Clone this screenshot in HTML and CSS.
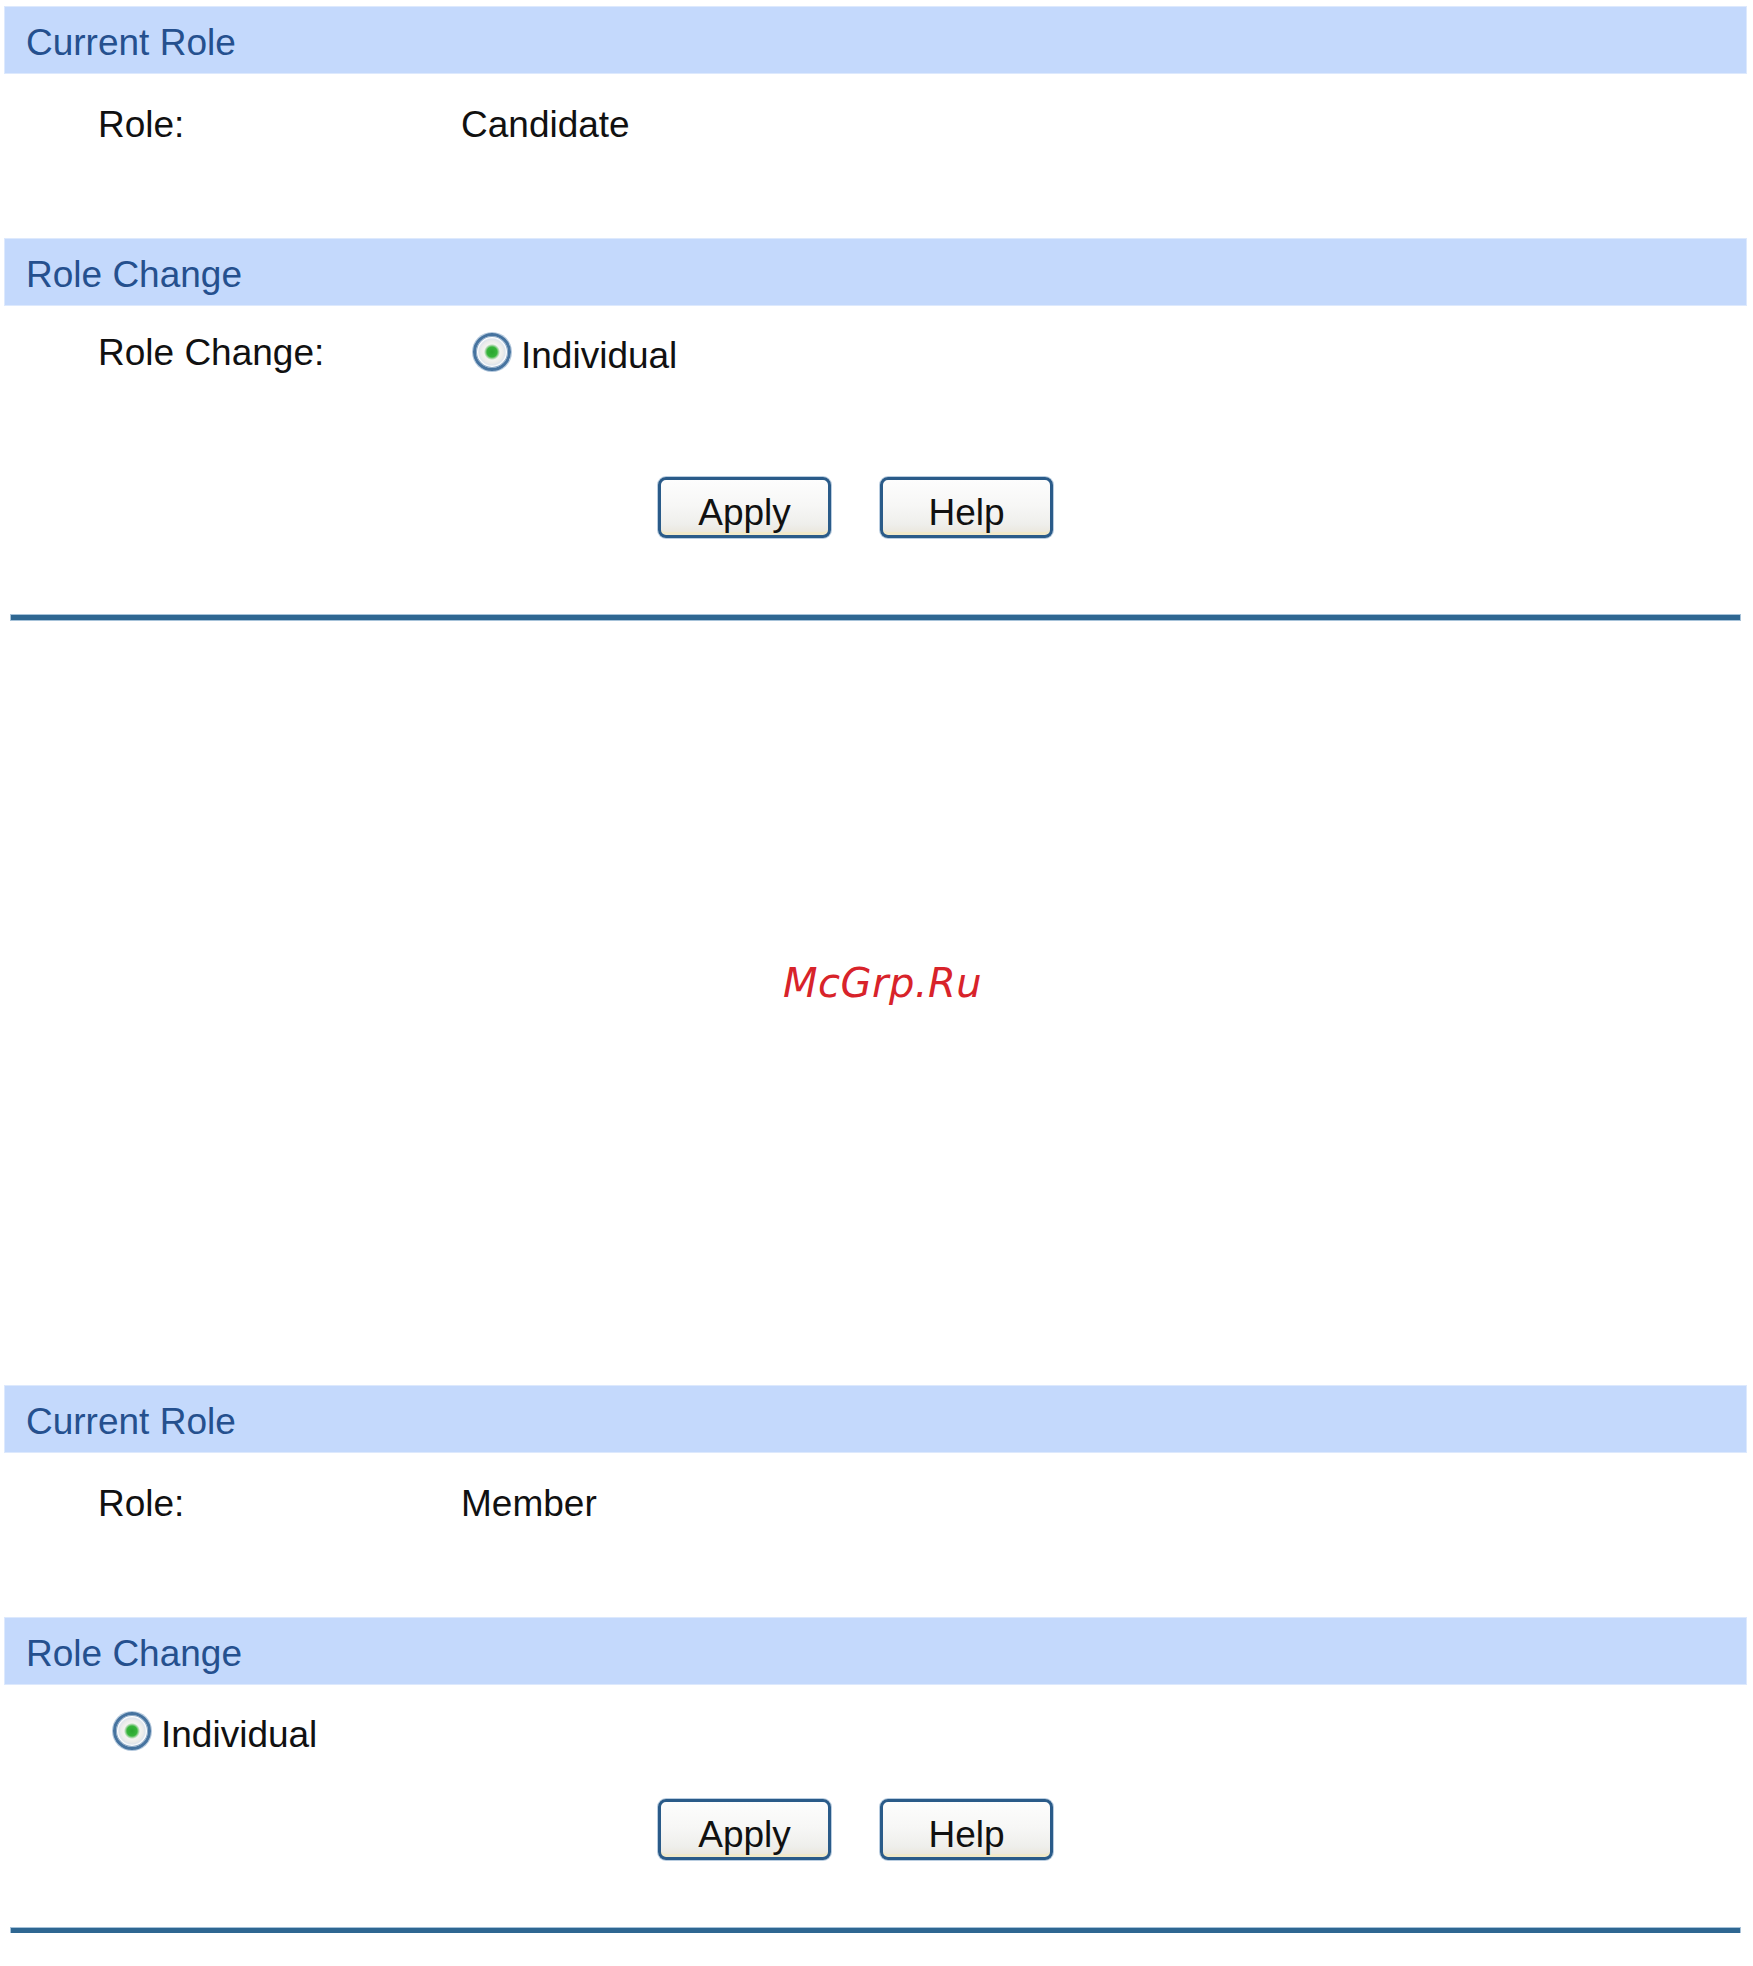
FILE: index.html
```html
<!DOCTYPE html>
<html lang="en">
<head>
<meta charset="utf-8">
<title>Role Change</title>
<link rel="stylesheet" href="styles.css">
</head>
<body>
<div class="page">
  <section class="panel">
    <div class="hdr">Current Role</div>
    <div class="row">
      <span class="label">Role:</span>
      <span class="value">Candidate</span>
    </div>
    <div class="hdr hdr-next">Role Change</div>
    <div class="row row-radio">
      <span class="label">Role Change:</span>
      <span class="value"><span class="radio"></span>Individual</span>
    </div>
    <div class="btns btns-a">
      <button class="btn">Apply</button>
      <button class="btn">Help</button>
    </div>
    <div class="rule rule-a"></div>
  </section>

  <div class="mark"><span class="mark-text">McGrp.Ru</span></div>

  <section class="panel">
    <div class="hdr">Current Role</div>
    <div class="row">
      <span class="label">Role:</span>
      <span class="value">Member</span>
    </div>
    <div class="hdr hdr-next">Role Change</div>
    <div class="row row-radio row-solo">
      <span class="solo"><span class="radio"></span>Individual</span>
    </div>
    <div class="btns btns-b">
      <button class="btn">Apply</button>
      <button class="btn">Help</button>
    </div>
    <div class="rule rule-b"></div>
  </section>
</div>
</body>
</html>
```

FILE: styles.css
```css
html, body {
  margin: 0;
  padding: 0;
  background: #ffffff;
}

body {
  font-family: "Liberation Sans", Arial, sans-serif;
  font-size: 37px;
  color: #111111;
}

.page {
  width: 1741px;
  padding: 7px 0 0 5px;
}

.hdr {
  height: 66px;
  box-sizing: border-box;
  padding: 16px 0 0 21px;
  line-height: 40px;
  background: #c4d9fc;
  color: #25508e;
  box-shadow: 0 0 0 1px #dde9fd;
}

.hdr-next {
  margin-top: 94px;
}

.row {
  display: grid;
  grid-template-columns: 363px 1fr;
  height: 40px;
  margin-top: 32px;
  padding-left: 93px;
  line-height: 40px;
  white-space: nowrap;
}

.row-radio {
  margin-top: 28px;
}

.row-solo {
  display: block;
  padding-left: 108px;
}

.radio {
  display: inline-block;
  width: 38px;
  height: 38px;
  box-sizing: border-box;
  border-radius: 50%;
  border: 3px solid #46739f;
  background:
    radial-gradient(circle at 50% 50%, #2aa52f 0, #36b53a 5px, #9ad39b 6.5px, #f3f3f1 8px, #ececea 11px, #dfe5ec 13px, #ffffff 14.5px, #ffffff 16px);
  box-shadow: 0 0 0 1px #b3c8dd, inset 0 0 0 1px #8fabc7;
  vertical-align: -3px;
  margin-left: 12px;
  margin-right: 10px;
}

.solo .radio {
  margin-left: 0;
}

.btns {
  display: flex;
  gap: 49px;
  padding-left: 653px;
}

.btns-a {
  margin-top: 104px;
}

.btns-b {
  margin-top: 47px;
}

.btn {
  width: 173px;
  height: 61px;
  box-sizing: border-box;
  margin: 0;
  padding: 10px 0 0;
  border: 3px solid #2a5b89;
  border-radius: 8px;
  background: linear-gradient(#fdfdfd 0%, #f7f7f6 45%, #efefec 80%, #e9e5da 100%);
  box-shadow: inset 0 -4px 0 -1px #f1e9c9, 0 0 0 1px #b9cde0;
  font-family: "Liberation Sans", Arial, sans-serif;
  font-size: 37px;
  line-height: 40px;
  color: #111111;
  text-align: center;
}

.rule {
  height: 5px;
  margin: 0 6px;
  background: #2f6792;
  box-shadow: 0 0 0 1px #a6c2d9;
}

.rule-a {
  margin-top: 77px;
}

.rule-b {
  margin-top: 68px;
}

.mark {
  height: 766px;
  box-sizing: border-box;
  padding: 339px 0 0 778px;
  line-height: 48px;
}

.mark-text {
  font-family: "DejaVu Sans", sans-serif;
  font-style: italic;
  font-size: 40px;
  letter-spacing: 0.5px;
  color: #d8232a;
}
```
